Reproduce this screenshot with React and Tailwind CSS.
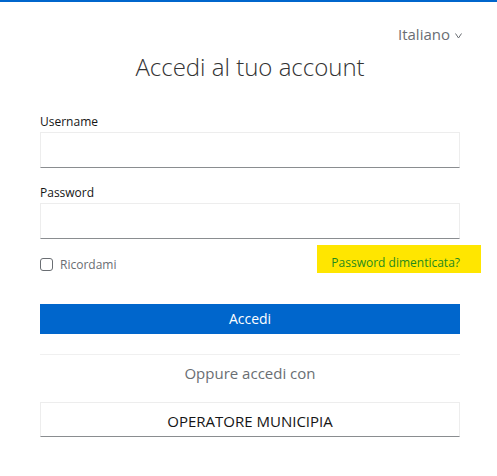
export default function App() {
  return (
    <div className="min-h-screen bg-white font-['Open_Sans',sans-serif] text-[#151515]">
      <div className="h-[2px] bg-[#0066cc]" />
      <div className="ml-[40px] w-[420px]">
        <div className="mt-[22px] flex justify-end -mr-[2px]">
          <button className="flex items-center gap-[5px] text-[15px] leading-[20px] text-[#6a6e73]">
            Italiano
            <svg width="7" height="6" viewBox="0 0 7 6" className="mt-[4px]">
              <polyline points="0.5,0.5 3.5,5 6.5,0.5" fill="none" stroke="#6a6e73" strokeWidth="1" />
            </svg>
          </button>
        </div>

        <h1 className="mt-[7px] text-center text-[24px] font-light leading-[32px] text-[#333333]">
          Accedi al tuo account
        </h1>

        <form className="mt-[30px]">
          <label className="block text-[12px] leading-[17px] text-[#151515]">Username</label>
          <input
            type="text"
            className="mt-[2px] block h-[36px] w-full border border-[#ededed] border-b-[#8a8d90] px-2 outline-none"
          />

          <label className="mt-[16px] block text-[12px] leading-[17px] text-[#151515]">Password</label>
          <input
            type="password"
            className="mt-[2px] block h-[36px] w-full border border-[#ededed] border-b-[#8a8d90] px-2 outline-none"
          />

          <div className="mt-[6px] flex items-start justify-between">
            <label className="mt-[11px] flex items-center gap-[7px] text-[12px] leading-[17px] text-[#6a6e73]">
              <span className="block h-[13px] w-[13px] rounded-[3px] border border-[#6a6e73] bg-white" />
              Ricordami
            </label>
            <a className="-mr-[21px] bg-[#ffe600] pl-[14px] pr-[21px] pt-[9px] pb-[2px] text-[12px] leading-[17px] text-[#1f8a1f]">
              Password dimenticata?
            </a>
          </div>

          <button
            type="button"
            className="mt-[31px] block h-[30px] w-full bg-[#0066cc] text-[14px] leading-[20px] text-white"
          >
            Accedi
          </button>
        </form>

        <div className="mt-[20px] h-px bg-[#f0f0f0]" />

        <p className="mt-[7px] text-center text-[15px] leading-[22px] text-[#6a6e73]">Oppure accedi con</p>

        <button
          type="button"
          className="mt-[18px] block h-[35px] w-full border border-[#ededed] border-b-[#8a8d90] pt-[3px] text-[15px] leading-[20px] text-[#151515]"
        >
          OPERATORE MUNICIPIA
        </button>
      </div>
    </div>
  );
}
